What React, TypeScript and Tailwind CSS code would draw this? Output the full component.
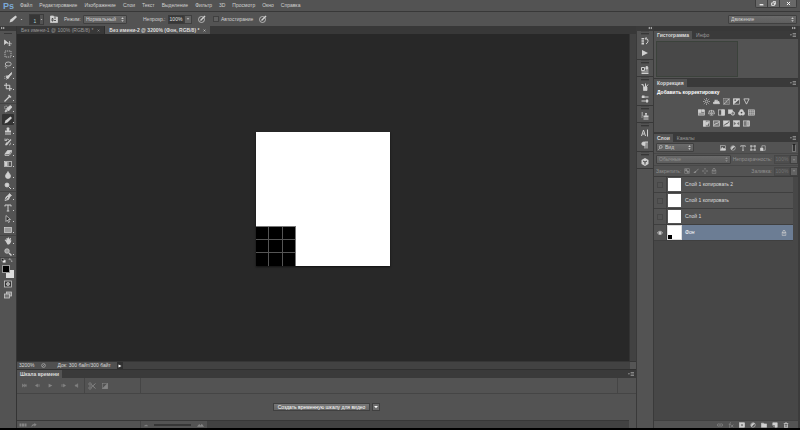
import React, { useState } from "react";

const icons: Record<string, React.ReactNode> = {
  move: (
    <>
      <path d="M1 2v9l3-3h4z" fill="currentColor" />
      <path d="M11 5v9M6.500 9.500h9M9.500 6.500 11 5l1.500 1.500M9.500 12.500 11 14l1.500-1.500" />
    </>
  ),
  marquee: <rect x="2" y="2" width="12" height="12" strokeDasharray="2.500 1.500" />,
  lasso: (
    <>
      <ellipse cx="8.500" cy="6" rx="6" ry="4" />
      <path d="M4 9c-2 1-2 3 0 3s1 2 0 3" />
    </>
  ),
  quick: (
    <>
      <path d="M15 1 8 8l2 2 6-7z" fill="currentColor" />
      <path d="M9 8c-3-1-5 1-4 4 2 2 5 1 5-2z" fill="currentColor" />
      <circle cx="4.500" cy="11" r="3.500" strokeDasharray="2 1.500" />
    </>
  ),
  crop: <path d="M4.500 0v11.500H16M0 4.500h11.500V16" strokeWidth="2" />,
  dropper: (
    <>
      <path d="m10 1 5 5-3 2-4-4z" fill="currentColor" stroke="none" />
      <path d="m10 6-7 7-2 2" strokeWidth="2.500" />
    </>
  ),
  heal: (
    <>
      <path d="M12 1 5 8l4 4 7-8z" fill="currentColor" />
      <path d="m4 9-2 5 5-2" fill="currentColor" />
      <circle cx="4" cy="5" r="3" strokeDasharray="2 1" />
    </>
  ),
  brush: (
    <path d="m13 1 3 3-9 9-6 2 2-6z" fill="currentColor" stroke="none" />
  ),
  wash: (
    <>
      <path d="m15 2-8 8" strokeWidth="2" />
      <path d="M7 8c-3 0-3 3-6 5 4 1 7 0 8-3z" fill="currentColor" stroke="none" />
    </>
  ),
  stamp: (
    <path
      d="M6 1h4l1 2-1 4h4v4H2V7h4L5 3zM2 13h12v2H2z"
      fill="currentColor"
      stroke="none"
    />
  ),
  history: (
    <>
      <path d="m14 3-7 7" strokeWidth="2.500" />
      <path d="M6 9c-2 1-2 3-3 5 3 0 4-1 5-3z" fill="currentColor" />
      <path d="M2 5c2-3 6-4 8-1M2 1v4h4M12 9c2 2 1 5-2 5" />
    </>
  ),
  eraser: (
    <>
      <path d="M7 3h8l-5 7H2z" fill="currentColor" />
      <path d="M2 10v3h8l5-6V3" />
    </>
  ),
  gradient: (
    <>
      <rect x="1" y="3" width="14" height="10" />
      <path d="M2 4h5v8H2z" fill="currentColor" stroke="none" />
      <path d="M7 4h3v8H7z" fill="currentColor" stroke="none" opacity=".5" />
    </>
  ),
  drop: <path d="M8 1c2 4 5 6 5 9a5 5 0 0 1-10 0c0-3 3-5 5-9z" fill="currentColor" />,
  dodge: (
    <>
      <circle cx="6" cy="6" r="4" fill="currentColor" />
      <path d="m9 9 5 5" strokeWidth="2" />
    </>
  ),
  pen: (
    <>
      <path d="m11 1 4 4-3 2-3 6-7 2 2-7 5-4z" fill="currentColor" />
      <path d="m3 14 5-6" stroke="#444" />
    </>
  ),
  type: <path d="M2 5V2h12v3M8 2v12M5.500 14h5" strokeWidth="2" />,
  path: <path d="M4 1v12l3-3 2 5 2-1-2-5h4z" fill="#2e2e2e" />,
  rect: <rect x="1" y="3" width="14" height="10" fill="#999" />,
  hand: (
    <path
      d="M3 8 1 6l2-1 2 2V2h2v3l1-4h2v4l2-3h2l-1 5 2 0-2 5-3 3H7z"
      fill="currentColor"
      stroke="none"
    />
  ),
  zoom: (
    <>
      <circle cx="6" cy="6" r="4.500" fill="#999" />
      <path d="m10 10 5 5" strokeWidth="3" />
    </>
  ),
  mask: (
    <>
      <rect x="1" y="2" width="14" height="12" fill="#333" />
      <circle cx="8" cy="8" r="3" fill="#999" />
    </>
  ),
  screen: (
    <>
      <rect x="5" y="2" width="10" height="8" fill="#888" />
      <rect x="1" y="6" width="10" height="8" fill="#777" />
    </>
  ),
  swap: <path d="M3 4c5-2 9 1 9 7M6 1 3 4l3 3M9 9l3 3 3-3" />,
  defaults: (
    <>
      <path d="M6 7h8v7H6z" fill="#eee" />
      <path d="M1 2h8v7H1z" fill="#111" />
    </>
  ),
  states: (
    <>
      <path d="M1 2h5v3H1zM1 6.500h5v3H1zM1 11h5v4H1z" fill="currentColor" stroke="none" />
      <path d="M9 3c6-1 7 8 1 11M11 1 8 3l3 3" strokeWidth="2" />
    </>
  ),
  play: <path d="M2 2v12l12-6z" fill="currentColor" stroke="none" />,
  props: (
    <>
      <path d="M1 3h6v6H1zM9 4h6M9 8h6M1 12h14M1 15h14" strokeWidth="2" />
      <path d="M10 1h3v5h-3z" fill="currentColor" />
    </>
  ),
  brushes: (
    <>
      <path d="M5 8h7v7H5z" fill="currentColor" />
      <path d="M6 8 3 2M9 8V1M10 8l4-5M1 3l4 1" strokeWidth="2" />
    </>
  ),
  presets: (
    <>
      <path d="M1 4h14M1 12h14" strokeWidth="2" />
      <path d="M2 1h5v5H2zM10 9h4v6h-4z" fill="currentColor" stroke="none" />
    </>
  ),
  source: (
    <>
      <path d="M8 2h4l-1 5h4v4H5V7h4zM5 13h10v2H5z" fill="currentColor" stroke="none" />
      <path d="M1 2h3M1 6h3M1 10h2" strokeWidth="2" />
    </>
  ),
  character: <path d="m1 14 4-12 4 12M3 10h4M13 1v14" strokeWidth="2" />,
  paragraph: (
    <>
      <path d="M8 2H5a3 3 0 0 0 0 7h3z" fill="currentColor" />
      <path d="M8 15V2h6M12 2v13" strokeWidth="2" />
    </>
  ),
  cube: (
    <>
      <path d="m8 0 7 4v8l-7 4-7-4V4z" fill="currentColor" stroke="none" />
      <path d="m4 6 4 2 4-2M8 8v5" stroke="#444" strokeWidth="2" />
    </>
  ),
  sun: (
    <>
      <circle cx="8" cy="8" r="3" />
      <path d="M8 0v3M8 13v3M0 8h3M13 8h3M2 2l2 2M12 12l2 2M2 14l2-2M12 4l2-2" />
    </>
  ),
  levels: <path d="M1 13V9l2 2 2-7 2 5 2-5 2 5 2-2 2 6z" fill="currentColor" />,
  curves: (
    <>
      <rect x="1" y="1" width="14" height="14" fill="#666" stroke="#999" />
      <path d="M2 13c6 0 6-10 12-10" strokeWidth="2" />
      <path d="M6 1v14M11 1v14M1 6h14M1 11h14" stroke="#888" strokeWidth="1" />
    </>
  ),
  exposure: (
    <>
      <rect x="1" y="2" width="14" height="12" />
      <path d="M1 14V2h14z" fill="currentColor" />
      <path d="M3 5h4M5 3v4" stroke="#444" />
    </>
  ),
  vibrance: <path d="M2 2h12L8 14z" strokeWidth="2" />,
  hue: (
    <>
      <rect x="1" y="2" width="14" height="12" fill="#777" />
      <path d="M1 2h6v6H1zM9 2h5v4H9zM1 11h14" fill="currentColor" />
    </>
  ),
  balance: <path d="M8 2v12M4 14h8M3 4h10M3 4 1 11h5zM13 4l-3 7h5z" />,
  bw: (
    <>
      <rect x="1" y="2" width="14" height="12" />
      <path d="M8 2h7v12H8z" fill="currentColor" />
    </>
  ),
  photo: (
    <>
      <rect x="1" y="2" width="9" height="8" fill="currentColor" />
      <circle cx="11" cy="10" r="4" fill="#777" strokeWidth="2" />
    </>
  ),
  mixer: (
    <>
      <circle cx="8" cy="5" r="4" fill="currentColor" />
      <circle cx="5" cy="10" r="4" fill="currentColor" />
      <circle cx="11" cy="10" r="4" fill="currentColor" />
      <circle cx="8" cy="8" r="2" fill="#444" stroke="none" />
    </>
  ),
  lookup: (
    <>
      <rect x="1" y="2" width="14" height="12" fill="#777" />
      <path d="M1 6h14M1 10h14M6 2v12M11 2v12" strokeWidth="1" />
    </>
  ),
  invert: (
    <>
      <rect x="1" y="2" width="14" height="12" />
      <path d="M1 2h5v12H1zM10 4c-5 0-5 8 0 8l4-8z" fill="currentColor" />
    </>
  ),
  poster: (
    <>
      <rect x="1" y="2" width="14" height="12" fill="#777" />
      <path d="m2 12 5-4h3l4-5" strokeWidth="2" />
    </>
  ),
  threshold: (
    <>
      <rect x="1" y="2" width="14" height="12" fill="currentColor" />
      <path d="m2 13 4-4 4-1 4-5" stroke="#3a3a3a" strokeWidth="2" />
    </>
  ),
  selective: (
    <>
      <rect x="1" y="2" width="14" height="12" fill="#777" />
      <path d="m1 2 7 6 7-6zM1 14l7-6 7 6z" fill="currentColor" />
    </>
  ),
  map: (
    <>
      <rect x="1" y="2" width="14" height="12" fill="#777" />
      <path d="M9 3h5v10H9z" fill="#999" />
    </>
  ),
  image: (
    <>
      <rect x="1" y="2" width="14" height="12" />
      <path d="m2 13 4-7 3 4 2-2 4 5z" fill="currentColor" />
    </>
  ),
  half: (
    <>
      <circle cx="8" cy="8" r="6" />
      <path d="M12 4a6 6 0 0 0-8 8z" fill="currentColor" />
    </>
  ),
  shape: <path d="M3 3h10v10H3zM1 1h4v4H1zM11 1h4v4h-4zM1 11h4v4H1zM11 11h4v4h-4z" />,
  smart: (
    <>
      <path d="M5 2h9v12H5z" />
      <path d="M1 8h7v7H1z" fill="currentColor" />
    </>
  ),
  pixels: (
    <>
      <rect x="2" y="2" width="12" height="12" />
      <path d="M4 4h4v4H4zM8 8h4v4H8z" fill="currentColor" />
    </>
  ),
  arrows: <path d="M8 1v5M8 10v5M1 8h5M10 8h5M6 3l2-2 2 2M6 13l2 2 2-2M3 6 1 8l2 2M13 6l2 2-2 2" />,
  lock: (
    <>
      <path d="M5 7V4a3 3 0 0 1 6 0v3" strokeWidth="2" />
      <rect x="3" y="7" width="10" height="7" />
      <path d="M5 10h6" />
    </>
  ),
  eye: (
    <>
      <path d="M1 8c4-6 10-6 14 0-4 5-10 5-14 0z" strokeWidth="2" />
      <circle cx="8" cy="8" r="3" fill="currentColor" />
    </>
  ),
  link: <path d="M7 5H4a3 3 0 0 0 0 6h3M9 5h3a3 3 0 0 1 0 6H9M5 8h6" strokeWidth="2" />,
  fx: <path d="M8 1C5 1 5 5 4 15M2 6h5M8 7l6 7M14 7l-6 7" strokeWidth="2" />,
  addMask: (
    <>
      <rect x="1" y="2" width="14" height="12" fill="currentColor" />
      <circle cx="8" cy="8" r="3" fill="#444" />
    </>
  ),
  folder: <path d="M1 3h6l1 2h7v9H1z" fill="currentColor" />,
  page: (
    <>
      <path d="M2 2h12v12H8V8H2z" fill="currentColor" />
      <path d="m2 9 5 5" />
    </>
  ),
  trash: (
    <>
      <path d="M2 4h12M6 2h4M4 6v9h8V6" strokeWidth="2" />
      <path d="M7 7v6M10 7v6" />
    </>
  ),
  first: <path d="M1 3v10l6-5zM8 3v10l6-5zM15 3v10" fill="currentColor" />,
  back: <path d="m9 3-8 5 8 5zM12 4v8M15 4v8" fill="currentColor" />,
  forward: <path d="m7 3 8 5-8 5zM1 4v8M4 4v8" fill="currentColor" />,
  sound: <path d="M12 2v12L7 10H4V6h3z" fill="currentColor" />,
  cut: (
    <>
      <circle cx="4" cy="4" r="2.500" />
      <circle cx="4" cy="12" r="2.500" />
      <path d="m6 5 9 8M6 11l9-8" strokeWidth="2" />
    </>
  ),
  fade: (
    <>
      <rect x="1" y="1" width="14" height="14" />
      <path d="M15 1v14H1z" fill="currentColor" />
    </>
  ),
  share: <path d="M1 14c0-6 3-9 8-9V2l6 5-6 5V9c-4 0-6 1-8 5z" fill="currentColor" stroke="none" />,
  frames: <path d="M1 5h4v6H1zM6 5h4v6H6zM11 5h4v6h-4z" fill="currentColor" stroke="none" />,
  hills: <path d="m0 13 5-6 3 3 3-4 5 7z" fill="currentColor" stroke="none" />,
  target: (
    <>
      <circle cx="7" cy="9" r="6" />
      <path d="m5 11 9-9" strokeWidth="3" />
    </>
  ),
  clock: (
    <>
      <circle cx="8" cy="8" r="6" />
      <path d="m5 11 6-6" />
    </>
  ),
  panel: (
    <>
      <path d="M1 2h6l1 2h7v11H1z" fill="currentColor" />
      <path d="M4 7h2v5H4zM8 6h4M8 11h4" stroke="#333" />
    </>
  ),
  search: (
    <>
      <circle cx="9" cy="6" r="4.500" strokeWidth="2" />
      <path d="m6 10-5 5" strokeWidth="2" />
    </>
  ),
  menu: (
    <>
      <path d="M0 6h5l-2.500 4z" fill="currentColor" stroke="none" />
      <path d="M7 4h9M7 8h9M7 12h9" strokeWidth="2" />
    </>
  ),
  caret: <path d="M3 5h10l-5 6z" fill="currentColor" stroke="none" />,
  updown: <path d="M4 6l4-5 4 5zM4 10l4 5 4-5z" fill="currentColor" stroke="none" />,
  collapse: <path d="M7 3v10L1 8zM15 3v10L9 8z" fill="currentColor" stroke="none" />,
  expand: <path d="M1 3v10l6-5zM9 3v10l6-5z" fill="currentColor" stroke="none" />,
  minimize: <path d="M2 12h12" strokeWidth="4" />,
  restore: <path d="M6 2h9v8h-3M2 6h9v8H2z" strokeWidth="2.500" />,
  close: <path d="m3 3 10 10M13 3 3 13" strokeWidth="3" />,
};

const Icon = ({ name, className = "size-2" }: { name: string; className?: string }) => (
  <svg
    viewBox="0 0 16 16"
    fill="none"
    stroke="currentColor"
    strokeWidth="1.500"
    aria-hidden="true"
    className={`shrink-0 ${className}`}
  >
    {icons[name]}
  </svg>
);

const IconButton = ({
  name,
  className = "",
  size = "size-2",
}: {
  name: string;
  className?: string;
  size?: string;
}) => (
  <button type="button" aria-label={name} className={`flex shrink-0 items-center justify-center ${className}`}>
    <Icon name={name} className={size} />
  </button>
);

const Select = ({
  label,
  value,
  className,
  search = false,
}: {
  label: string;
  value: string;
  className: string;
  search?: boolean;
}) => (
  <div className={`relative h-[9px] shrink-0 ${className}`}>
    <select
      aria-label={label}
      className={`block h-full w-full appearance-none rounded-[1px] border border-[#404040] bg-linear-to-b from-[#6a6a6a] to-[#5e5e5e] leading-[7px] ${search ? "pl-2" : "pl-0.5"}`}
    >
      <option>{value}</option>
    </select>
    {search && <Icon name="search" className="pointer-events-none absolute top-0.5 left-0.5 size-[5px]" />}
    <Icon name="updown" className="pointer-events-none absolute top-0.5 right-0.5 size-[5px]" />
  </div>
);

const Percent = ({ label, dim = false }: { label: string; dim?: boolean }) => (
  <div className="flex h-[9px] shrink-0">
    <input
      aria-label={label}
      defaultValue="100%"
      className={`w-4 border text-center ${dim ? "border-[#474747] bg-[#4e4e4e] text-[#727272]" : "border-[#3c3c3c] bg-[#383838] text-[#e0e0e0]"}`}
    />
    <IconButton name="caret" size="size-1" className="w-2 border border-[#404040] bg-[#626262]" />
  </div>
);

const PanelTabs = ({ tabs }: { tabs: string[] }) => (
  <div className="flex h-2 items-stretch bg-[#3a3a3a]">
    {tabs.map((tab, i) => (
      <button
        type="button"
        key={tab}
        className={i === 0 ? "bg-[#535353] px-[3px] font-bold text-[#dcdcdc]" : "px-1 text-[#999]"}
      >
        {tab}
      </button>
    ))}
    <IconButton name="menu" size="size-[6px]" className="mr-0.5 ml-auto text-[#a0a0a0]" />
  </div>
);

const menus = [
  "Файл",
  "Редактирование",
  "Изображение",
  "Слои",
  "Текст",
  "Выделение",
  "Фильтр",
  "3D",
  "Просмотр",
  "Окно",
  "Справка",
];

const toolGroups = [
  ["move", "marquee", "lasso", "quick", "crop", "dropper"],
  ["heal", "brush", "stamp", "history", "eraser", "gradient", "drop", "dodge"],
  ["pen", "type", "path", "rect"],
  ["hand", "zoom"],
];

const dockGroups = [
  ["states", "play"],
  ["props"],
  ["brushes", "presets"],
  ["source"],
  ["character", "paragraph"],
  ["cube"],
];

const adjustments = [
  ["sun", "levels", "curves", "exposure", "vibrance"],
  ["hue", "balance", "bw", "photo", "mixer", "lookup"],
  ["invert", "poster", "threshold", "selective", "map"],
];

const layers = ["Слой 1 копировать 2", "Слой 1 копировать", "Слой 1"];

const Header = () => (
  <header>
    <div className="flex h-3 items-center border-b border-[#383838]">
      <span className="w-5 pl-[3px] text-[9px] leading-[10px] font-bold text-[#7ba9d6]">Ps</span>
      <nav className="flex gap-[7px]">
        {menus.map((menu) => (
          <button type="button" key={menu}>
            {menu}
          </button>
        ))}
      </nav>
      <div className="mr-[3px] ml-auto flex h-2 self-start rounded-b-[2px] border border-t-0 border-[#3e3e3e] bg-[#686868] text-white">
        <IconButton name="minimize" size="size-[5px]" className="w-3 border-r border-[#3e3e3e]" />
        <IconButton name="restore" size="size-[5px]" className="w-3 border-r border-[#3e3e3e]" />
        <IconButton name="close" size="size-[5px]" className="w-4" />
      </div>
    </div>
    <div className="flex h-3.5 items-center pl-[9px]">
      <Icon name="brush" />
      <Icon name="caret" className="ml-[3px] size-[3px]" />
      <button type="button" className="ml-1.5 flex h-[11px] w-[15px] border border-[#3c3c3c]">
        <span className="flex-1 bg-[#363636] pt-1 text-[5px] leading-[5px] text-[#a6d4d4]">1</span>
        <Icon name="caret" className="mt-[3px] size-[3px]" />
      </button>
      <IconButton name="panel" className="ml-1.5" />
      <span className="ml-1.5 w-[19px] shrink-0">Режим:</span>
      <Select label="Режим" value="Нормальный" className="w-11" />
      <span className="ml-4 w-[25px] shrink-0">Непрозр.:</span>
      <Percent label="Непрозрачность" />
      <IconButton name="target" className="ml-1.5" />
      <label className="ml-[7px] flex items-center gap-0.5">
        <input type="checkbox" className="size-1.5 appearance-none border border-[#404040] bg-[#606060]" />
        Автостирание
      </label>
      <IconButton name="target" className="ml-1.5" />
      <Select label="Рабочая среда" value="Движение" className="mr-[3px] ml-auto w-[69px]" />
    </div>
  </header>
);

const Toolbar = () => {
  const [active, setActive] = useState("brush");
  return (
    <aside className="flex w-[17px] shrink-0 flex-col border-r border-[#343434]">
      <div className="h-[5px] bg-[#3a3a3a] pl-px">
        <Icon name="expand" className="size-1" />
      </div>
      <div className="mx-1 mt-0.5 mb-[3px] h-px bg-[#383838]" />
      {toolGroups.map((group) => (
        <div key={group[0]} className="shadow-[0_1px_0_#444]">
          {group.map((tool) => (
            <button
              type="button"
              key={tool}
              aria-label={tool}
              onClick={() => setActive(tool)}
              className={`relative mx-0.5 flex h-[11px] w-3 items-center justify-center ${active === tool ? "rounded-[1px] bg-[#333]" : ""}`}
            >
              <Icon name={tool} />
              {tool !== "move" && <span className="absolute right-0 bottom-0.5 size-px bg-[#ccc]" />}
            </button>
          ))}
        </div>
      ))}
      <div className="mt-px flex justify-between pr-[3px] pl-px">
        <IconButton name="defaults" size="size-[5px]" />
        <IconButton name="swap" size="size-[5px]" />
      </div>
      <div className="relative mt-0.5 ml-0.5 h-[13px] w-3">
        <button type="button" aria-label="Цвет фона" className="absolute right-0 bottom-0 size-2 bg-[#ddd]" />
        <button type="button" aria-label="Основной цвет" className="absolute top-0 left-0 size-2 border border-[#999] bg-black" />
      </div>
      <IconButton name="mask" className="mr-px h-[11px]" />
      <IconButton name="screen" className="mr-px h-[11px]" />
    </aside>
  );
};

const Workspace = () => (
  <main className="flex min-w-0 flex-1 flex-col">
    <div className="flex h-2 bg-[#383838] text-[#999]">
      <button type="button" className="flex items-center border-r border-[#2c2c2c] pr-1 pl-1">
        Без имени-1 @ 100% (RGB/8) * <Icon name="close" className="ml-1 size-[3px]" />
      </button>
      <button type="button" className="flex items-center bg-[#535353] px-1 font-bold text-[#ddd]">
        Без имени-2 @ 3200% (Фон, RGB/8) * <Icon name="close" className="ml-1 size-[3px]" />
      </button>
    </div>
    <div className="flex flex-1 bg-[#282828]">
      <div className="flex flex-1 items-center justify-center pt-0.5">
        <div className="flex size-[134px] items-end bg-white shadow-[0_1px_2px_#111]">
          <div className="grid size-10 grid-cols-3 gap-px border-t border-r border-[#777] bg-[#555]">
            {Array.from({ length: 9 }, (_, i) => (
              <span key={i} className="bg-black" />
            ))}
          </div>
        </div>
      </div>
      <div className="w-[7px] border-l border-[#333] bg-[#424242]" />
    </div>
    <div className="flex h-2 border-t border-[#363636] bg-[#424242] text-[#d8d8d8]">
      <div className="flex w-[106px] items-center bg-[#505050] pl-0.5">
        3200%
        <Icon name="clock" className="ml-1.5 size-[5px]" />
        <span className="ml-3">Док: 300 байт/300 байт</span>
        <IconButton name="play" size="size-1" className="ml-auto h-full w-1.5 bg-[#303030] text-white" />
      </div>
      <div className="ml-auto w-1.5 bg-[#555]" />
    </div>
    <Timeline />
  </main>
);

const Timeline = () => (
  <section className="border-t border-[#303030]">
    <PanelTabs tabs={["Шкала времени"]} />
    <div className="flex h-4 border-b border-[#454545] text-[#858585]">
      <div className="flex w-[68px] items-center gap-[5px] border-r border-[#454545] pl-[3px]">
        {["first", "back", "play", "forward", "sound"].map((name) => (
          <IconButton key={name} name={name} size="size-[5px]" className="w-2" />
        ))}
      </div>
      <div className="flex w-14 items-center gap-1.5 border-r border-[#454545] pl-[3px]">
        <IconButton name="cut" />
        <IconButton name="fade" size="size-1.5" />
      </div>
      <div className="mr-[18px] flex-1 border-r border-[#454545]" />
    </div>
    <div className="flex h-[26px] items-center justify-center gap-0.5">
      <button type="button" className="h-2 border border-[#404040] bg-linear-to-b from-[#777] to-[#656565] px-1 leading-[6px] text-white">
        Создать временную шкалу для видео
      </button>
      <IconButton name="caret" size="size-1.5" className="h-2 border border-[#404040] bg-[#6c6c6c] text-white" />
    </div>
    <div className="mr-[7px] flex h-2 border-t border-[#383838] bg-[#424242] text-[#858585]">
      <div className="flex w-[124px] items-center gap-1 border-r border-[#454545] bg-[#535353] pl-0.5">
        <IconButton name="frames" />
        <IconButton name="share" size="size-1.5" />
      </div>
      <div className="flex w-[66px] items-center justify-between bg-[#535353] px-[3px]">
        <Icon name="hills" className="size-1" />
        <input type="range" aria-label="Масштаб" className="h-0.5 w-[37px] appearance-none bg-[#363636] [&::-webkit-slider-thumb]:appearance-none" />
        <Icon name="hills" className="size-[7px]" />
      </div>
    </div>
  </section>
);

const Dock = () => (
  <aside className="mx-px w-4 shrink-0 bg-[#535353]">
    <div className="flex h-[5px] justify-end bg-[#3a3a3a] pr-px">
      <Icon name="collapse" className="size-1" />
    </div>
    {dockGroups.map((group) => (
      <div key={group[0]} className="border-b border-[#383838]">
        <div className="mx-1 h-1 border-y border-[#484848] pt-px">
          <div className="h-px bg-[#363636]" />
        </div>
        {group.map((name) => (
          <IconButton key={name} name={name} className="h-3 w-full" />
        ))}
      </div>
    ))}
  </aside>
);

const Panels = () => (
  <aside className="flex w-[146px] shrink-0 flex-col border-r-2 border-[#3c3c3c]">
    <div className="flex h-[5px] justify-end bg-[#383838] pr-0.5">
      <Icon name="expand" className="size-1" />
    </div>
    <PanelTabs tabs={["Гистограмма", "Инфо"]} />
    <div className="h-10 border-b border-[#383838] p-0.5">
      <div className="h-9 w-[82px] border border-[#3b423b] bg-[#484848]" />
    </div>
    <PanelTabs tabs={["Коррекция"]} />
    <div className="h-[47px] border-b-2 border-[#3a3a3a] pt-px">
      <h2 className="ml-[3px] leading-[8px] font-bold text-white">Добавить корректировку</h2>
      {adjustments.map((row, i) => (
        <div key={i} className="flex h-[11px] items-center justify-center gap-0.5">
          {row.map((name) => (
            <IconButton key={name} name={name} className="w-2" size="size-[7px]" />
          ))}
        </div>
      ))}
    </div>
    <PanelTabs tabs={["Слои", "Каналы"]} />
    <div className="flex h-[11px] items-center pl-0.5">
      <Select label="Фильтр" value="Вид" search className="w-[38px]" />
      <div className="ml-[26px] flex gap-1">
        {["image", "half", "type", "shape", "smart"].map((name) => (
          <IconButton key={name} name={name} size="size-1.5" className="w-1.5" />
        ))}
      </div>
      <span className="mr-0.5 ml-auto h-2 w-1 border border-[#777] border-t-[#222] bg-[#333]" />
    </div>
    <div className="flex h-3 items-center border-t border-[#484848] pl-0.5 text-[#919191]">
      <Select label="Режим наложения" value="Обычные" className="w-[75px]" />
      <span className="mr-0.5 ml-auto">Непрозрачность:</span>
      <Percent label="Непрозрачность слоя" dim />
    </div>
    <div className="flex h-[11px] items-center border-t border-[#484848] pl-0.5 text-[#919191]">
      <span className="w-7">Закрепить:</span>
      <div className="flex gap-[3px]">
        {["pixels", "wash", "arrows", "lock"].map((name) => (
          <IconButton key={name} name={name} size="size-1.5" className="w-1.5" />
        ))}
      </div>
      <span className="mr-0.5 ml-auto">Заливка:</span>
      <Percent label="Заливка" dim />
    </div>
    <div className="flex-1 border-t border-[#3c3c3c] bg-[#474747] pr-[5px]">
      {layers.map((name) => (
        <div key={name} className="flex h-4 items-center border-b border-[#3f3f3f] bg-[#535353]">
          <div className="flex h-full w-[13px] items-center border-r border-[#424242] pl-[3px]">
            <input type="checkbox" aria-label={name} className="size-1.5 appearance-none border border-[#474747]" />
          </div>
          <span className="ml-px size-[13px] bg-white" />
          <span className="ml-1 text-[#ddd]">{name}</span>
        </div>
      ))}
      <div className="flex h-4 items-center border-b border-[#3f3f3f] bg-[#6c7d94]">
        <div className="flex h-full w-[13px] items-center border-r border-[#424242] bg-[#535353] pl-[3px]">
          <IconButton name="eye" size="size-1.5" />
        </div>
        <span className="ml-px flex size-[13px] items-end bg-white outline outline-[#ddd]">
          <span className="size-1 bg-black" />
        </span>
        <i className="ml-1 text-white">Фон</i>
        <Icon name="lock" className="mr-1.5 ml-auto size-1.5" />
      </div>
    </div>
    <div className="flex h-2 items-center justify-end gap-[5px] border-t border-[#404040] pr-[9px]">
      {["link", "fx", "addMask", "half", "folder", "page", "trash"].map((name, i) => (
        <IconButton
          key={name}
          name={name}
          size="size-1.5"
          className={i < 2 ? "w-1.5 text-[#888]" : "w-1.5"}
        />
      ))}
    </div>
  </aside>
);

const App: React.FC = () => (
  <div className="flex min-h-screen flex-col border-b-2 border-black bg-[#535353] font-['Liberation_Sans',sans-serif] text-[5px] leading-[7px] whitespace-nowrap text-[#d0d0d0]">
    <Header />
    <div className="flex flex-1 bg-[#3a3a3a] *:bg-[#535353]">
      <Toolbar />
      <Workspace />
      <Dock />
      <Panels />
    </div>
  </div>
);

export default App;
